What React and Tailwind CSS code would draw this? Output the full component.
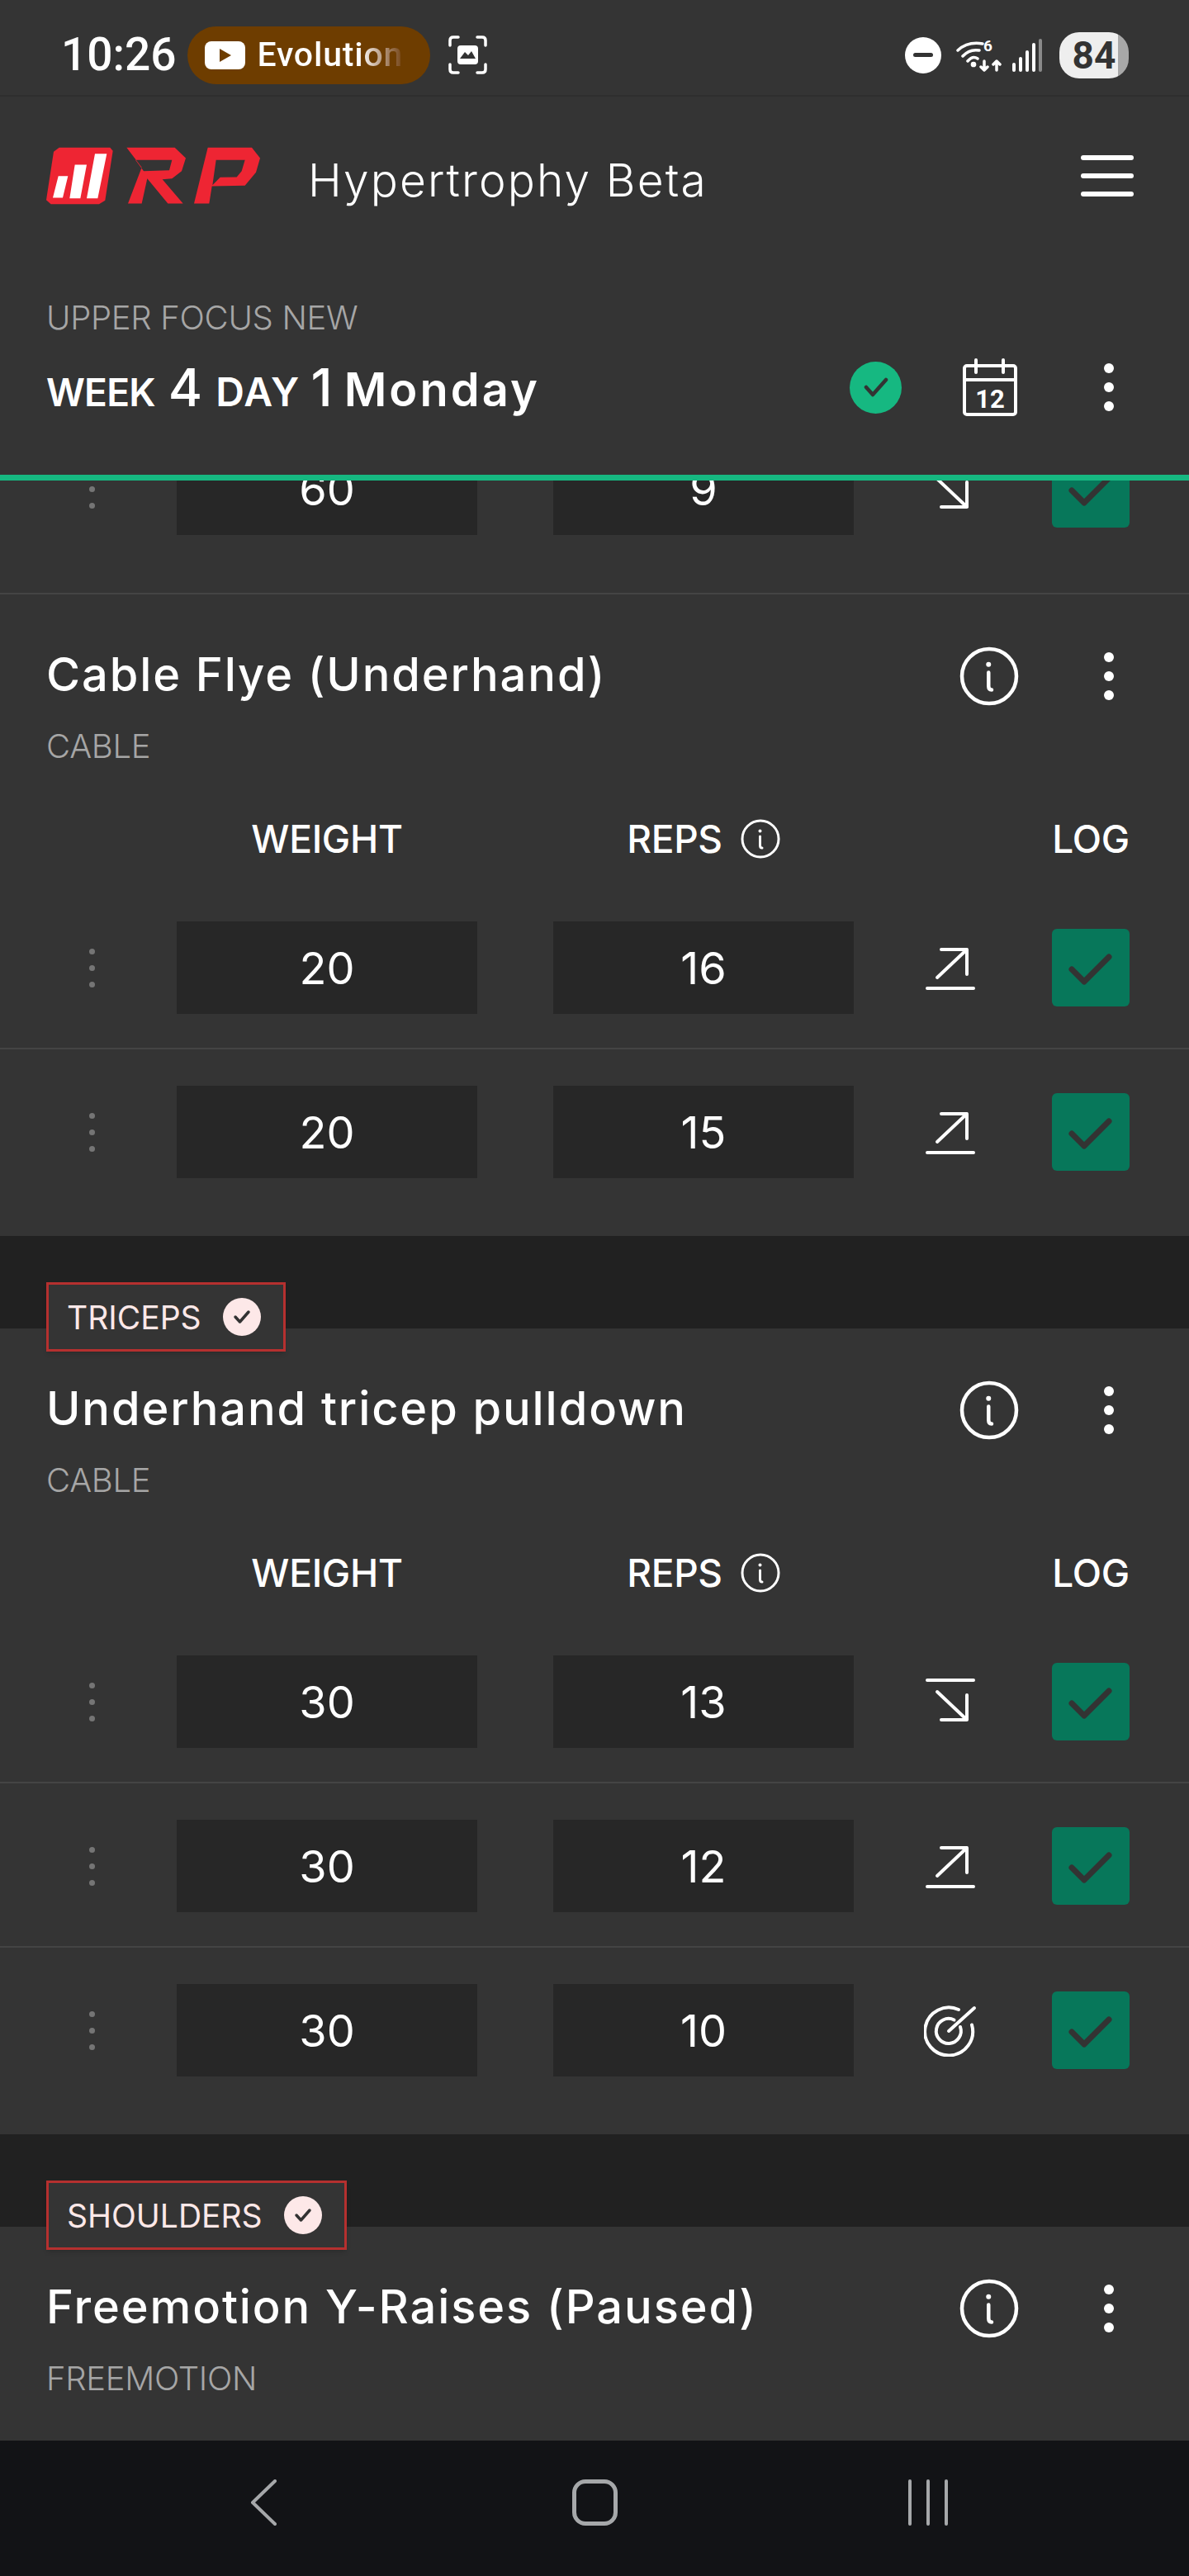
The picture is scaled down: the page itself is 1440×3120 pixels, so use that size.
import React from 'react';

const ROW_GRID = 'grid grid-cols-[158px_364px_92px_364px_240px_94px] items-center pl-14';

const exercises = [
  {
    id: 'cable-flye',
    name: 'Cable Flye (Underhand)',
    gear: 'CABLE',
    sets: [
      { weight: 20, reps: 16, trend: 'up' },
      { weight: 20, reps: 15, trend: 'up' },
    ],
  },
  {
    id: 'tricep-pulldown',
    tag: 'TRICEPS',
    name: 'Underhand tricep pulldown',
    gear: 'CABLE',
    sets: [
      { weight: 30, reps: 13, trend: 'down' },
      { weight: 30, reps: 12, trend: 'up' },
      { weight: 30, reps: 10, trend: 'target' },
    ],
  },
  {
    id: 'y-raises',
    tag: 'SHOULDERS',
    name: 'Freemotion Y-Raises (Paused)',
    gear: 'FREEMOTION',
    sets: [],
  },
];

function Logo() {
  return (
    <svg width="260" height="70" viewBox="48 38 780 209" className="shrink-0">
      <path d="M95 40L280 40L290 52L262 232L240 245L65 245L48 230L75 55Z" fill="#ee2533" />
      <path d="M92 143L127 143L108 222L72 222Z M152 102L195 102L172 224L133 224Z M225 62L268 62L235 224L195 224Z" fill="#fff" />
      <path
        fillRule="evenodd"
        d="M340 40L515 40L555 78L540 125L505 152L470 155L545 243L490 243L415 152L395 243L345 243L395 112Z M372 85L505 85L495 122L402 125Z"
        fill="#ee2533"
      />
      <path
        fillRule="evenodd"
        d="M635 40L795 40L825 78L810 130L770 178L650 180L640 243L585 243Z M665 85L770 85L758 125L740 147L680 148L652 176Z"
        fill="#ee2533"
      />
    </svg>
  );
}

function InfoIcon({ size }) {
  return (
    <svg width={size} height={size} viewBox="0 0 48 48" fill="none" stroke="#fff" strokeWidth="3" strokeLinecap="round" className="shrink-0">
      <circle cx="24" cy="24" r="22" />
      <circle cx="23.5" cy="14.5" r="2" fill="#fff" stroke="none" />
      <path d="M23.5 21V32Q23.5 35 26 35" />
    </svg>
  );
}

function MoreDots() {
  return (
    <div className="flex w-3 shrink-0 flex-col gap-[11px]">
      <div className="h-3 w-3 rounded-full bg-white" />
      <div className="h-3 w-3 rounded-full bg-white" />
      <div className="h-3 w-3 rounded-full bg-white" />
    </div>
  );
}

function TrendIcon({ trend }) {
  if (trend === 'down') {
    return (
      <svg width="60" height="60" viewBox="0 0 60 60" fill="none" stroke="#fff" strokeWidth="4" strokeLinecap="round" strokeLinejoin="round">
        <path d="M2 4H58M14 18L50 52M50 22V52H19" />
      </svg>
    );
  }
  if (trend === 'up') {
    return (
      <svg width="60" height="60" viewBox="0 0 60 60" fill="none" stroke="#fff" strokeWidth="4" strokeLinecap="round" strokeLinejoin="round">
        <path d="M2 55H58M14 42L50 8M19 8H50V38" />
      </svg>
    );
  }
  return (
    <svg width="64" height="64" viewBox="0 0 64 64" fill="none" stroke="#fff" strokeWidth="4" strokeLinecap="round">
      <path d="M42 7A29 29 0 1 0 58 25.5" />
      <path d="M36.5 19.5A15 15 0 1 0 44 28" />
      <path d="M30 33L61 5" />
    </svg>
  );
}

function SetRow({ set, last }) {
  return (
    <div className={last ? 'h-[199px]' : 'h-[199px] border-b-2 border-[#444444]'}>
      <div className={`${ROW_GRID} pt-[44px]`}>
        <div className="flex w-[110px] flex-col items-center gap-[13px]">
          <div className="h-[7px] w-[7px] rounded-full bg-[#757575]" />
          <div className="h-[7px] w-[7px] rounded-full bg-[#757575]" />
          <div className="h-[7px] w-[7px] rounded-full bg-[#757575]" />
        </div>
        <div className="flex h-[112px] items-center justify-center bg-[#272727] text-[54px] text-white">{set.weight}</div>
        <div />
        <div className="flex h-[112px] items-center justify-center bg-[#272727] text-[54px] text-white">{set.reps}</div>
        <div className="flex justify-center pr-[6px]">
          <TrendIcon trend={set.trend} />
        </div>
        <div className="flex h-[94px] w-[94px] items-center justify-center rounded-[6px] bg-[#07775a]">
          <svg width="94" height="94" viewBox="0 0 94 94" fill="none" stroke="#333333" strokeWidth="7" strokeLinecap="round" strokeLinejoin="round">
            <path d="M24 49L39 64L69 34" />
          </svg>
        </div>
      </div>
    </div>
  );
}

function MuscleTag({ label }) {
  return (
    <div className="h-[112px] bg-[#212121] pl-14 pt-[56px]">
      <div className="relative z-10 inline-flex h-[84px] items-center gap-[26px] border-[3px] border-[#b5302f] bg-[#343434] pl-[22px] pr-[27px] shadow-md">
        <span className="text-[39px] leading-none text-[#fde8e8]">{label}</span>
        <div className="flex h-[46px] w-[46px] items-center justify-center rounded-full bg-[#fde8e8]">
          <svg width="22" height="20" viewBox="0 0 22 20" fill="none" stroke="#333333" strokeWidth="3.5" strokeLinecap="round" strokeLinejoin="round">
            <path d="M3 10L8.5 16L19 4" />
          </svg>
        </div>
      </div>
    </div>
  );
}

function ExerciseCard({ exercise }) {
  return (
    <div>
      {exercise.tag && <MuscleTag label={exercise.tag} />}
      <div className="pb-[27px]">
        <div className="box-content flex h-[84px] items-center justify-between pl-14 pr-[91px] pt-[55px]">
          <h2 className="text-[56px] font-medium leading-none tracking-[1.9px] text-white">{exercise.name}</h2>
          <div className="mt-[4px] flex items-center gap-[103px]">
            <InfoIcon size={72} />
            <MoreDots />
          </div>
        </div>
        <div className="mt-[20px] flex h-[50px] items-center pl-14 text-[40px] font-light leading-none tracking-[-0.3px] text-[#a6a6a6]">
          {exercise.gear}
        </div>
        {exercise.sets.length > 0 && (
          <>
            <div className={`${ROW_GRID} mb-[26px] mt-[57px] h-[60px] text-[46px] font-medium leading-none tracking-[-0.3px] text-white`}>
              <div />
              <div className="text-center">WEIGHT</div>
              <div />
              <div className="flex items-center justify-center gap-[22px]">
                REPS
                <InfoIcon size={48} />
              </div>
              <div />
              <div className="flex justify-center">LOG</div>
            </div>
            {exercise.sets.map((set, i) => (
              <SetRow key={i} set={set} last={i === exercise.sets.length - 1} />
            ))}
          </>
        )}
      </div>
    </div>
  );
}

function StatusBar() {
  return (
    <div className="flex h-[117px] shrink-0 items-center border-b-2 border-[#2e2e2e] pl-[74px] pr-[73px] pt-[18px] font-[Roboto,sans-serif]">
      <span className="text-[55px] font-medium leading-none text-white">10:26</span>
      <div className="ml-[13px] flex h-[70px] w-[294px] items-center rounded-full bg-[#6e3d00] pl-[21px]">
        <svg width="49" height="34" viewBox="0 0 49 34">
          <rect width="49" height="34" rx="8" fill="#fff" />
          <path d="M18 9L32 17L18 25Z" fill="#6e3d00" />
        </svg>
        <span className="ml-[15px] w-[178px] bg-linear-to-r from-white from-70% to-[#6e3d00] bg-clip-text text-[41px] font-medium leading-[1.2] tracking-[0.8px] text-transparent">
          Evolution
        </span>
      </div>
      <svg width="47" height="47" viewBox="0 0 47 47" fill="none" className="ml-[22px]">
        <path d="M2 12V6Q2 2 6 2H12M35 2H41Q45 2 45 6V12M45 35V41Q45 45 41 45H35M12 45H6Q2 45 2 41V35" stroke="#fff" strokeWidth="3.5" strokeLinecap="round" />
        <rect x="11" y="12" width="25" height="23" rx="4" fill="#fff" />
        <path d="M14 28L20 20L24 24L28 19L33 28Z" fill="#333333" />
      </svg>
      <div className="ml-auto flex h-[44px] w-[44px] items-center justify-center rounded-full bg-white">
        <div className="h-[5px] w-[24px] rounded-full bg-[#333333]" />
      </div>
      <svg width="56" height="40" viewBox="0 0 56 40" fill="none" stroke="#fff" strokeWidth="3.5" strokeLinecap="round" strokeLinejoin="round" className="ml-[18px]">
        <path d="M2 14Q14 3 32 6M8 21Q16 12 28 14M14 27Q20 20 26 24M34 27V38M30 34L34 38L38 34M49 38V27M45 31L49 27L53 31" />
        <circle cx="21" cy="31" r="1.6" fill="#fff" />
        <text x="33" y="15" fontSize="19" fontWeight="700" fill="#fff" stroke="none" fontFamily="Roboto, sans-serif">6</text>
      </svg>
      <svg width="36" height="40" viewBox="0 0 36 40" fill="none" strokeWidth="4" strokeLinecap="round" className="ml-[12px]">
        <path d="M2 31V38M10 24V38M18 16V38M26 7V38" stroke="#fff" />
        <path d="M34 2V38" stroke="#8a8a8a" />
      </svg>
      <div className="ml-[21px] flex h-[56px] w-[84px] items-center justify-center overflow-hidden rounded-[24px] bg-linear-to-r from-[#eeeeee] from-[84%] to-[#a8a8a8] to-[84%] text-[46px] font-bold leading-none text-[#333333]">
        84
      </div>
    </div>
  );
}

function AppHeader() {
  return (
    <div className="h-[458px] shrink-0 pl-14">
      <div className="box-content flex h-[70px] items-center pr-[67px] pt-[61px]">
        <Logo />
        <span className="ml-[57px] mt-[10px] text-[55px] font-light leading-none tracking-[2.1px] text-white">Hypertrophy Beta</span>
        <div className="ml-auto flex w-[64px] flex-col gap-[16px]">
          <div className="h-[6px] rounded-full bg-white" />
          <div className="h-[6px] rounded-full bg-white" />
          <div className="h-[6px] rounded-full bg-white" />
        </div>
      </div>
      <div className="mt-[112px] flex h-[50px] items-center text-[40px] font-light leading-none tracking-[-0.3px] text-[#a6a6a6]">UPPER FOCUS NEW</div>
      <div className="mt-[14px] flex h-[90px] items-center justify-between pr-[91px]">
        <div className="flex items-baseline font-semibold leading-none text-white">
          <span className="text-[46px] tracking-[-0.8px]">WEEK</span>
          <span className="ml-[16px] text-[63px] font-medium">4</span>
          <span className="ml-[16px] text-[48px] tracking-[1.4px]">DAY</span>
          <span className="ml-[13px] text-[63px] font-medium">1</span>
          <span className="ml-[14px] text-[56px] tracking-[3px]">Monday</span>
        </div>
        <div className="flex items-center">
          <div className="flex h-[63px] w-[63px] items-center justify-center rounded-full bg-[#16b881]">
            <svg width="30" height="24" viewBox="0 0 30 24" fill="none" stroke="#333333" strokeWidth="4.5" strokeLinecap="round" strokeLinejoin="round">
              <path d="M3 12L11 21L27 3" />
            </svg>
          </div>
          <svg width="66" height="70" viewBox="0 0 66 70" fill="none" stroke="#fff" strokeWidth="4" strokeLinecap="round" className="ml-[74px]">
            <rect x="2" y="9" width="62" height="59" rx="3" />
            <path d="M2 26H64M16 2V17M49 2V17" />
            <text x="33" y="60" textAnchor="middle" fontSize="31" fontWeight="700" fill="#fff" stroke="none" fontFamily="Roboto, sans-serif">12</text>
          </svg>
          <div className="ml-[105px]">
            <MoreDots />
          </div>
        </div>
      </div>
    </div>
  );
}

function NavBar() {
  return (
    <div className="flex h-[164px] shrink-0 items-start bg-[#121316] pl-[303px] pt-[47px]">
      <svg width="32" height="56" viewBox="0 0 32 56" fill="none" stroke="#a6a8aa" strokeWidth="4" strokeLinecap="round" strokeLinejoin="round">
        <path d="M30 2L3 28L30 54" />
      </svg>
      <div className="ml-[358px] h-[56px] w-[55px] rounded-[16px] border-[5px] border-[#a6a8aa]" />
      <div className="ml-[352px] flex h-[56px] w-[48px] justify-between">
        <div className="w-1 rounded-full bg-[#a6a8aa]" />
        <div className="w-1 rounded-full bg-[#a6a8aa]" />
        <div className="w-1 rounded-full bg-[#a6a8aa]" />
      </div>
    </div>
  );
}

export default function App() {
  return (
    <div className="flex h-[3120px] w-[1440px] flex-col overflow-hidden bg-[#343434] font-[Inter,sans-serif]">
      <StatusBar />
      <AppHeader />
      <div className="h-[7px] shrink-0 bg-[#16b881]" />
      <div className="min-h-0 flex-1 overflow-hidden">
        {/* list is scrolled, the last set of the previous exercise sits under the header */}
        <div className="-mt-[90px] border-b-2 border-[#444444] pb-[27px]">
          <SetRow set={{ weight: 60, reps: 9, trend: 'down' }} last />
        </div>
        {exercises.map((exercise) => (
          <ExerciseCard key={exercise.id} exercise={exercise} />
        ))}
      </div>
      <NavBar />
    </div>
  );
}
